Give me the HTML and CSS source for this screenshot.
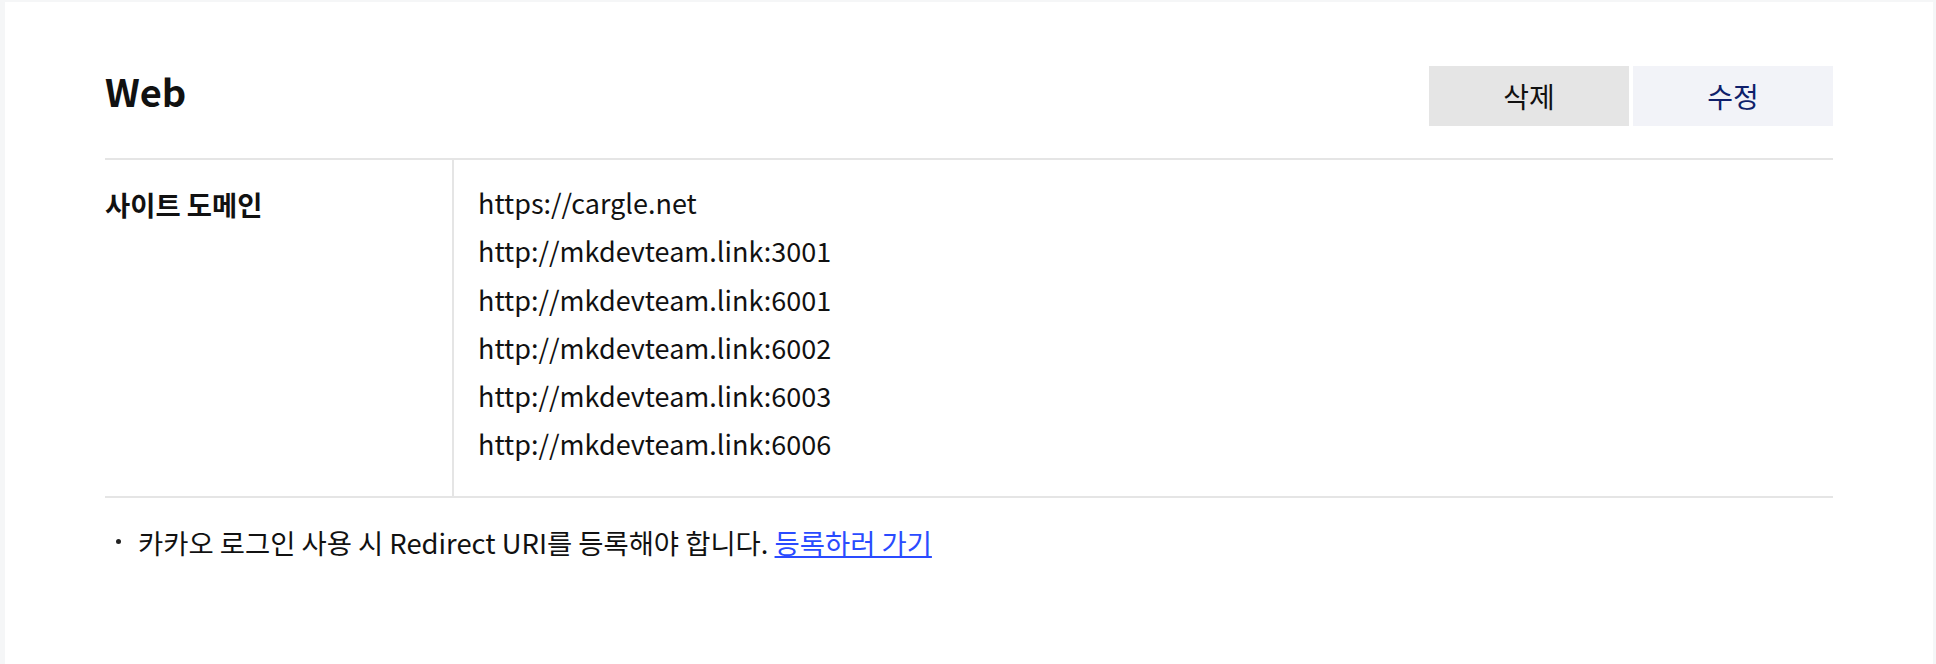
FILE: index.html
```html
<!DOCTYPE html>
<html>
<head>
<meta charset="utf-8">
<title>Web</title>
<link rel="stylesheet" href="styles.css">
</head>
<body>
<div class="card">
  <div class="header">
    <h2 class="title">Web</h2>
    <div class="actions">
      <button class="btn btn-delete">삭제</button>
      <button class="btn btn-edit">수정</button>
    </div>
  </div>
  <div class="table">
    <div class="label">사이트 도메인</div>
    <div class="value">
      <div class="url">https://cargle.net</div>
      <div class="url">http://mkdevteam.link:3001</div>
      <div class="url">http://mkdevteam.link:6001</div>
      <div class="url">http://mkdevteam.link:6002</div>
      <div class="url">http://mkdevteam.link:6003</div>
      <div class="url">http://mkdevteam.link:6006</div>
    </div>
  </div>
  <ul class="notes">
    <li class="note">카카오 로그인 사용 시 Redirect URI를 등록해야 합니다. <a href="#" class="link">등록하러 가기</a></li>
  </ul>
</div>
</body>
</html>
```
FILE: styles.css
```css
html, body {
  margin: 0;
  padding: 0;
  background: #f5f6f7;
  height: 100%;
}
body {
  font-family: "Noto Sans CJK KR", "Noto Sans", sans-serif;
  color: #111;
  overflow: hidden;
}
.card {
  background: #fff;
  margin: 2px 3px 0 5px;
  padding: 64px 100px 0;
  min-height: 700px;
}
.header {
  display: flex;
  justify-content: space-between;
  align-items: flex-start;
  padding-bottom: 32px;
}
.title {
  margin: 0;
  font-size: 38px;
  font-weight: 700;
  color: #111;
  line-height: 50px;
}
.actions {
  display: flex;
  gap: 4px;
}
.btn {
  width: 200px;
  height: 60px;
  border: 0;
  font-family: inherit;
  font-size: 28px;
  cursor: pointer;
}
.btn-delete {
  background: #e5e5e5;
  color: #111;
}
.btn-edit {
  background: #f2f3f8;
  color: #0f1f6b;
}
.table {
  display: grid;
  grid-template-columns: 347px 1fr;
  border-top: 2px solid #e5e5e5;
  border-bottom: 2px solid #e5e5e5;
}
.label {
  font-size: 27.4px;
  font-weight: 700;
  padding-top: 24px;
  line-height: 40px;
}
.value {
  border-left: 2px solid #e5e5e5;
  padding: 19px 24px 27px;
}
.url {
  font-size: 27px;
  line-height: 48.3px;
}
.notes {
  margin: 0;
  padding: 24px 0 0 0;
  list-style: none;
  font-size: 27.4px;
  line-height: 40px;
}
.note {
  display: flex;
  align-items: center;
  white-space: pre;
}
.note::before {
  content: "";
  width: 5px;
  height: 5px;
  border-radius: 50%;
  background: #222;
  margin: 0 17px 0 11px;
  flex: none;
}
.link {
  color: #2a4bff;
}
```
